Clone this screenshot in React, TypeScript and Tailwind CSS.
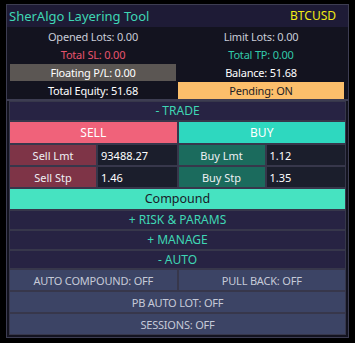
import React from 'react';

const font = { fontFamily: '"Noto Sans", "Open Sans", sans-serif' };

export default function App() {
    return (
        <div className="w-[355px] h-[343px] bg-black pt-[4px] pl-[6px]" style={font}>
            {/* top panel: title + account info */}
            <div className="w-[343px] border border-[#3d3d52]">
                <div className="h-[22px] bg-[#1e1b36] flex items-center justify-between pl-[2px] pr-[12px]">
                    <span className="text-[13px] text-[#3fd6b4] leading-none">SherAlgo Layering Tool</span>
                    <span className="text-[12px] text-[#f2ea14] leading-none">BTCUSD</span>
                </div>
                <div className="bg-[#13131f] pt-[1px] pl-[3px] grid grid-cols-[166px_166px] gap-x-[2px] gap-y-[1px] text-[11px] tracking-[-0.2px] leading-none">
                    <InfoCell className="text-[#c9ccd8]">Opened Lots: 0.00</InfoCell>
                    <InfoCell className="text-[#c9ccd8]">Limit Lots: 0.00</InfoCell>
                    <InfoCell className="text-[#e7546d]">Total SL: 0.00</InfoCell>
                    <InfoCell className="text-[#32c9a9]">Total TP: 0.00</InfoCell>
                    <InfoCell className="bg-[#5b5653] text-white">Floating P/L: 0.00</InfoCell>
                    <InfoCell className="text-white">Balance: 51.68</InfoCell>
                    <InfoCell className="text-white">Total Equity: 51.68</InfoCell>
                    <InfoCell className="bg-[#fcbf6b] text-[#1c1c24]">Pending: ON</InfoCell>
                </div>
            </div>

            {/* trade panel */}
            <div className="w-[343px] border border-[#3d3d52] bg-[#13131f] px-[2px] pb-[2px]">
                <div className="border border-[#37374b] bg-[#37374b] flex flex-col gap-[2px] text-[12px] leading-none">
                    <SectionRow h="h-[18px]">- TRADE</SectionRow>
                    <div className="grid grid-cols-2 gap-[2px] h-[21px]">
                        <div className="bg-[#f0627a] text-white flex items-center justify-center">SELL</div>
                        <div className="bg-[#2ed8bf] text-white flex items-center justify-center">BUY</div>
                    </div>
                    <div className="grid grid-cols-2 gap-[2px] h-[20px]">
                        <PriceField label="Sell Lmt" value="93488.27" labelBg="bg-[#7e3447]" />
                        <PriceField label="Buy Lmt" value="1.12" labelBg="bg-[#1b6b5d]" />
                    </div>
                    <div className="grid grid-cols-2 gap-[2px] h-[20px]">
                        <PriceField label="Sell Stp" value="1.46" labelBg="bg-[#7e3447]" />
                        <PriceField label="Buy Stp" value="1.35" labelBg="bg-[#1b6b5d]" />
                    </div>
                    <div className="h-[20px] bg-[#46e3c1] text-[#1a1a28] text-[12.5px] flex items-center justify-center">Compound</div>
                    <SectionRow h="h-[18px]">+ RISK &amp; PARAMS</SectionRow>
                    <SectionRow h="h-[18px]">+ MANAGE</SectionRow>
                    <SectionRow h="h-[17px]">- AUTO</SectionRow>
                    <div className="grid grid-cols-2 gap-[2px] h-[20px]">
                        <AutoBtn>AUTO COMPOUND: OFF</AutoBtn>
                        <AutoBtn>PULL BACK: OFF</AutoBtn>
                    </div>
                    <div className="h-[20px] flex"><AutoBtn>PB AUTO LOT: OFF</AutoBtn></div>
                    <div className="h-[20px] flex"><AutoBtn>SESSIONS: OFF</AutoBtn></div>
                </div>
            </div>
        </div>
    );
}

function InfoCell({ children, className }: any) {
    return <div className={`h-[17px] flex items-center justify-center ${className}`}>{children}</div>;
}

function SectionRow({ children, h }: any) {
    return <div className={`${h} bg-[#272343] text-[#3fd6b4] flex items-center justify-center`}>{children}</div>;
}

function PriceField({ label, value, labelBg }: any) {
    return (
        <div className="grid grid-cols-[86px_1fr] gap-[2px] text-[11px]">
            <div className={`${labelBg} text-[#eef0f4] flex items-center justify-center`}>{label}</div>
            <div className="bg-[#1b1e2c] text-white flex items-center pl-[3px]">{value}</div>
        </div>
    );
}

function AutoBtn({ children }: any) {
    return <div className="flex-1 bg-[#3c4465] text-[#c6cad8] text-[11px] tracking-[-0.2px] flex items-center justify-center">{children}</div>;
}
